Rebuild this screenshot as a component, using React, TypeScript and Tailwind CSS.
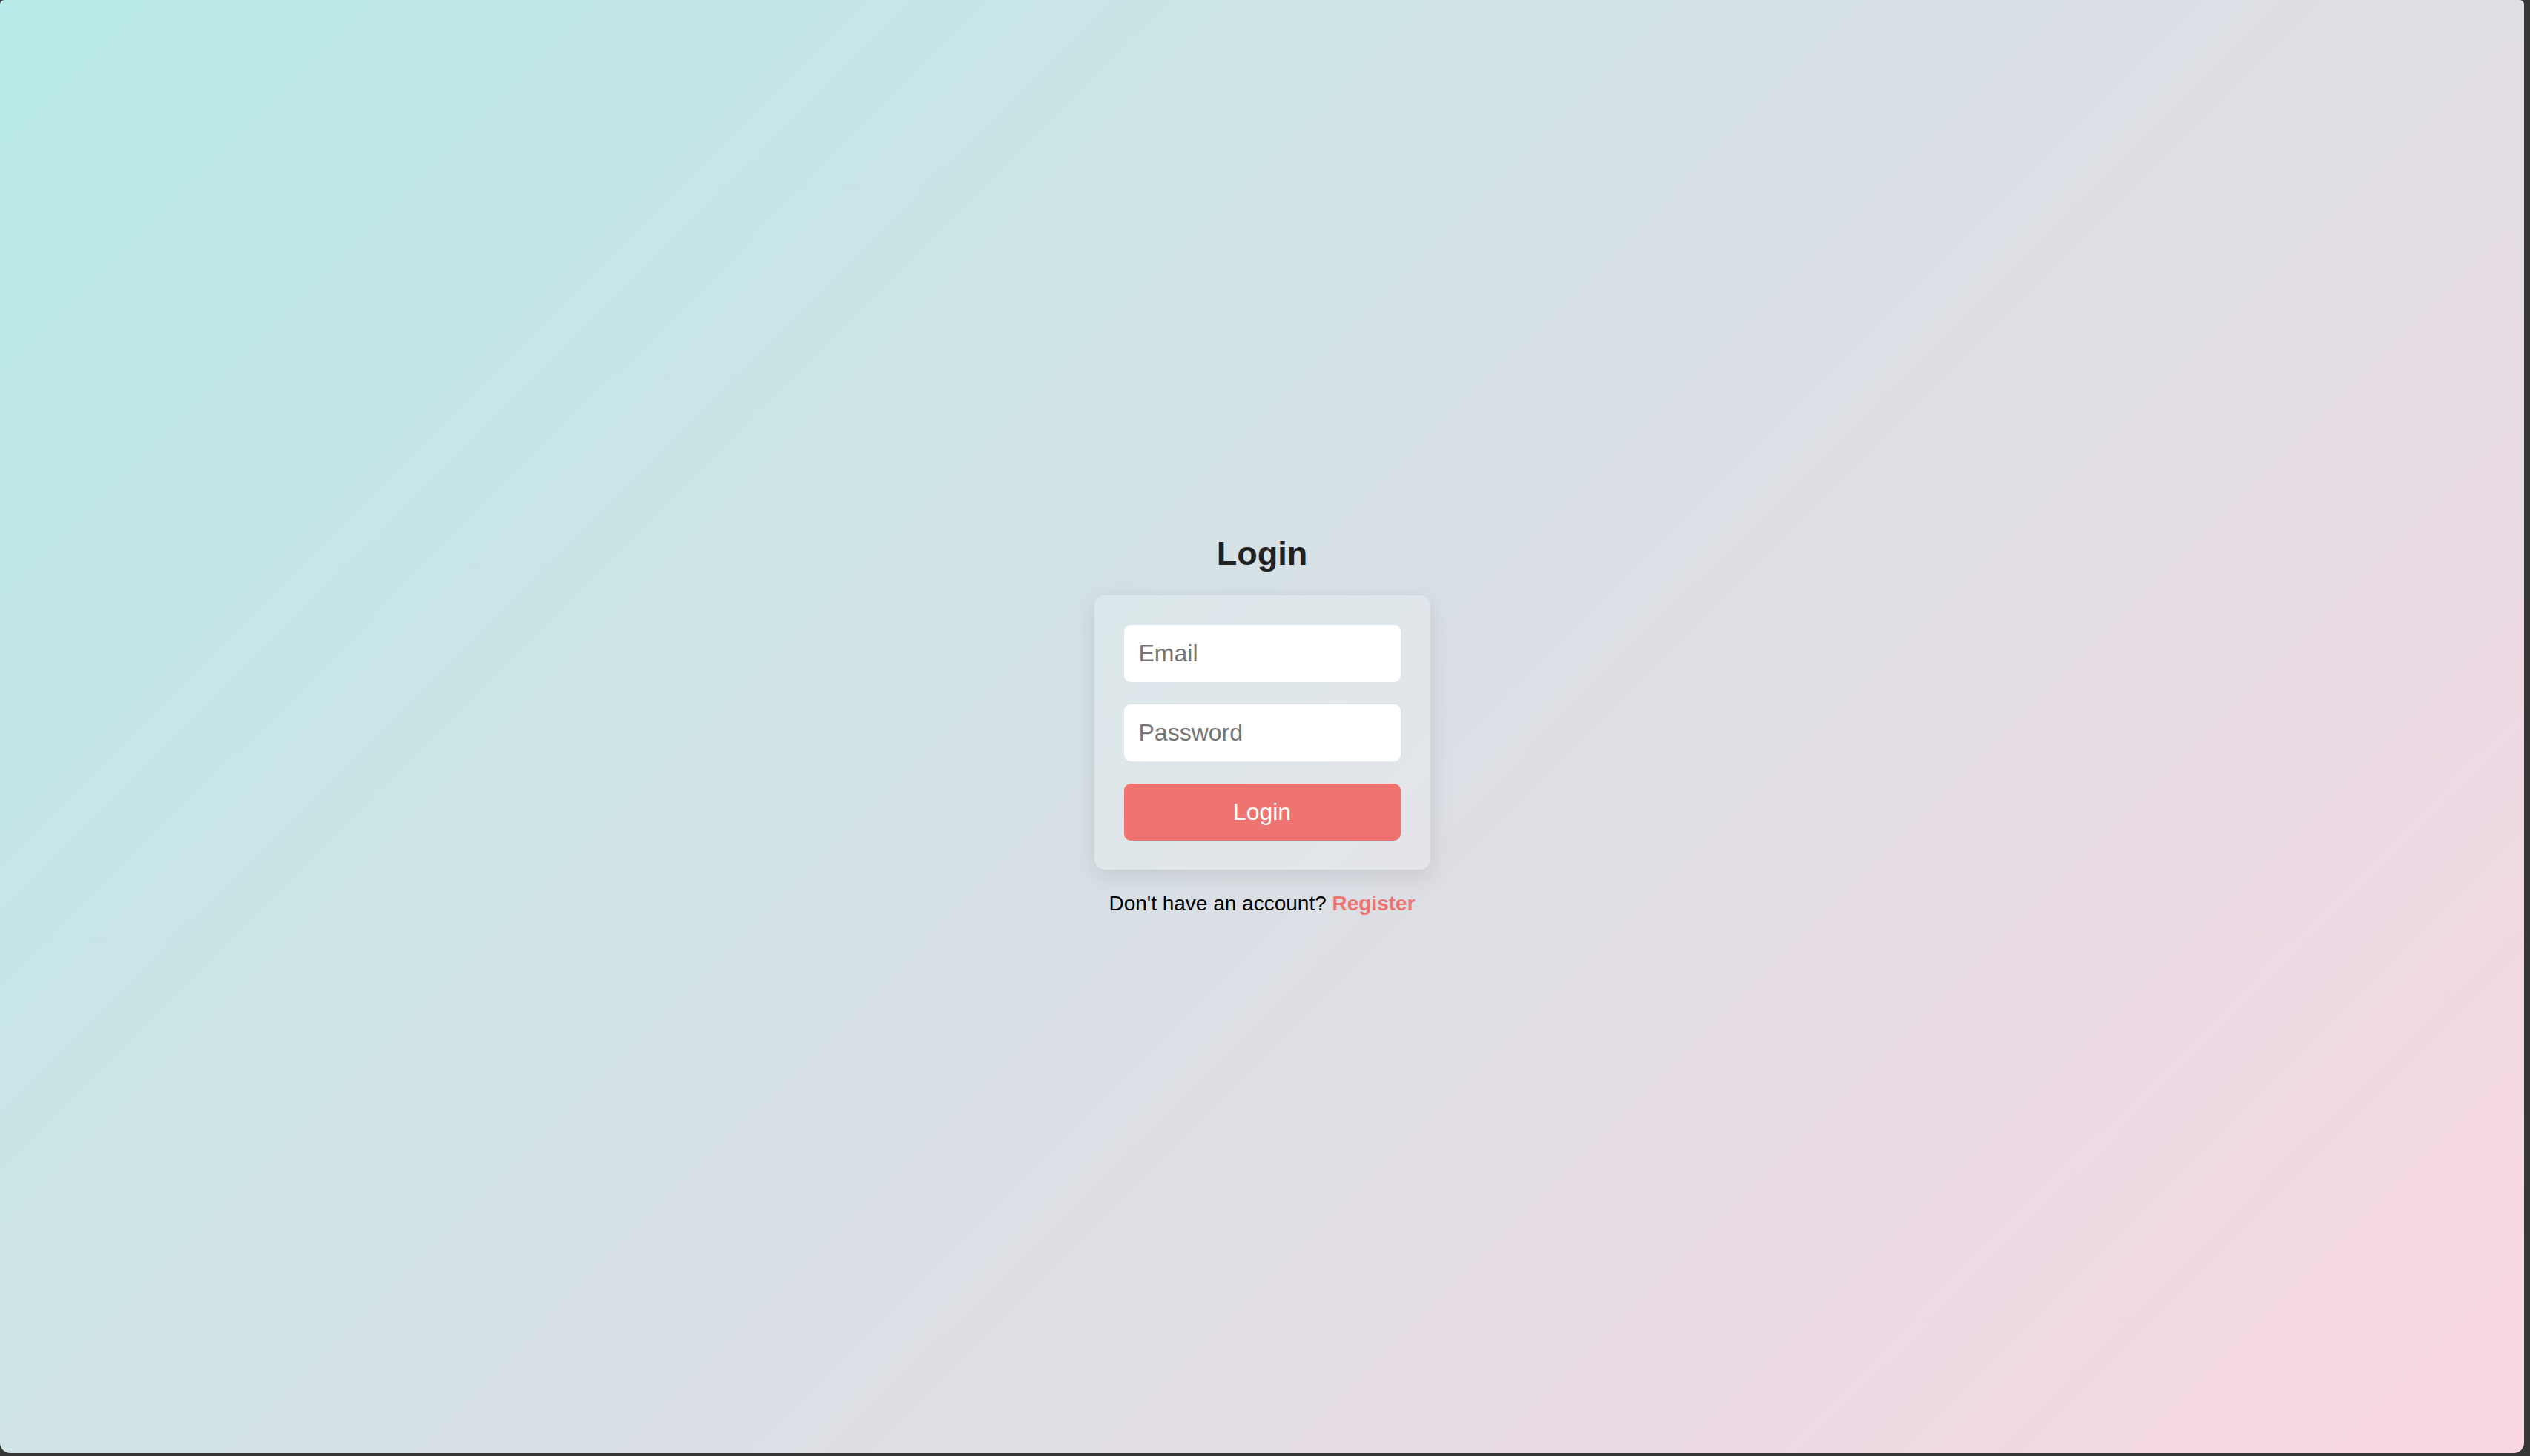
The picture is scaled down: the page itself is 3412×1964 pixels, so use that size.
import React from "react";

export default function App() {
  return (
    <div className="w-[3412px] h-[1964px] bg-[#363636] pr-[8px] pb-[4px]" style={{ fontFamily: '"Liberation Sans", Arial, sans-serif' }}>
      <div className="w-[3404px] h-[1960px] rounded-t-[6px] rounded-b-[14px] overflow-hidden bg-[linear-gradient(135deg,#b7eae8_0%,#f9d6e2_100%)] flex flex-col items-center justify-center pb-[5px]">
        <h1 className="text-[45px] leading-[52px] font-bold text-[#222222]">Login</h1>
        <form
          className="mt-[30px] w-[453px] rounded-[14px] bg-white/20 shadow-[0_8px_30px_rgba(0,0,0,0.1)] px-[40px] pt-[40px] pb-[39px] flex flex-col gap-[30px]"
          onSubmit={(e) => e.preventDefault()}
        >
          <input
            type="email"
            placeholder="Email"
            className="h-[77px] w-full rounded-[9px] bg-white px-[20px] text-[32px] text-[#222] placeholder:text-[#757575] outline-none"
          />
          <input
            type="password"
            placeholder="Password"
            className="h-[77px] w-full rounded-[9px] bg-white px-[20px] text-[32px] text-[#222] placeholder:text-[#757575] outline-none"
          />
          <button
            type="submit"
            className="h-[77px] w-full rounded-[9px] bg-[#ef7471] text-white text-[32px]"
          >
            Login
          </button>
        </form>
        <p className="mt-[30px] text-[28px] leading-[32px] text-black">
          Don't have an account? <a className="font-bold text-[#ef7471]">Register</a>
        </p>
      </div>
    </div>
  );
}
